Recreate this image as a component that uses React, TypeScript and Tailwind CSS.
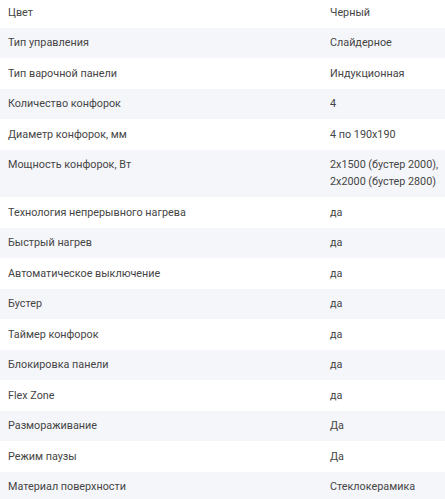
const specs: [string, string][] = [
  ["Цвет", "Черный"],
  ["Тип управления", "Слайдерное"],
  ["Тип варочной панели", "Индукционная"],
  ["Количество конфорок", "4"],
  ["Диаметр конфорок, мм", "4 по 190x190"],
  ["Мощность конфорок, Вт", "2x1500 (бустер 2000), 2x2000 (бустер 2800)"],
  ["Технология непрерывного нагрева", "да"],
  ["Быстрый нагрев", "да"],
  ["Автоматическое выключение", "да"],
  ["Бустер", "да"],
  ["Таймер конфорок", "да"],
  ["Блокировка панели", "да"],
  ["Flex Zone", "да"],
  ["Размораживание", "Да"],
  ["Режим паузы", "Да"],
  ["Материал поверхности", "Стеклокерамика"],
];

export default function App() {
  return (
    <div className="w-[445px] h-[499px] overflow-hidden bg-white font-['Roboto',sans-serif] text-[10.8px] leading-[17px] text-[#454545]">
      <div className="-mt-[3px]">
        {specs.map(([label, value], i) => (
          <div
            key={label}
            className={`grid grid-cols-[322px_1fr] py-[6.75px] ${i % 2 === 1 ? "bg-[#f5f6fa]" : "bg-white"}`}
          >
            <div className="pl-2 pr-4">{label}</div>
            <div className="pl-2 pr-[2px]">{value}</div>
          </div>
        ))}
      </div>
    </div>
  );
}
